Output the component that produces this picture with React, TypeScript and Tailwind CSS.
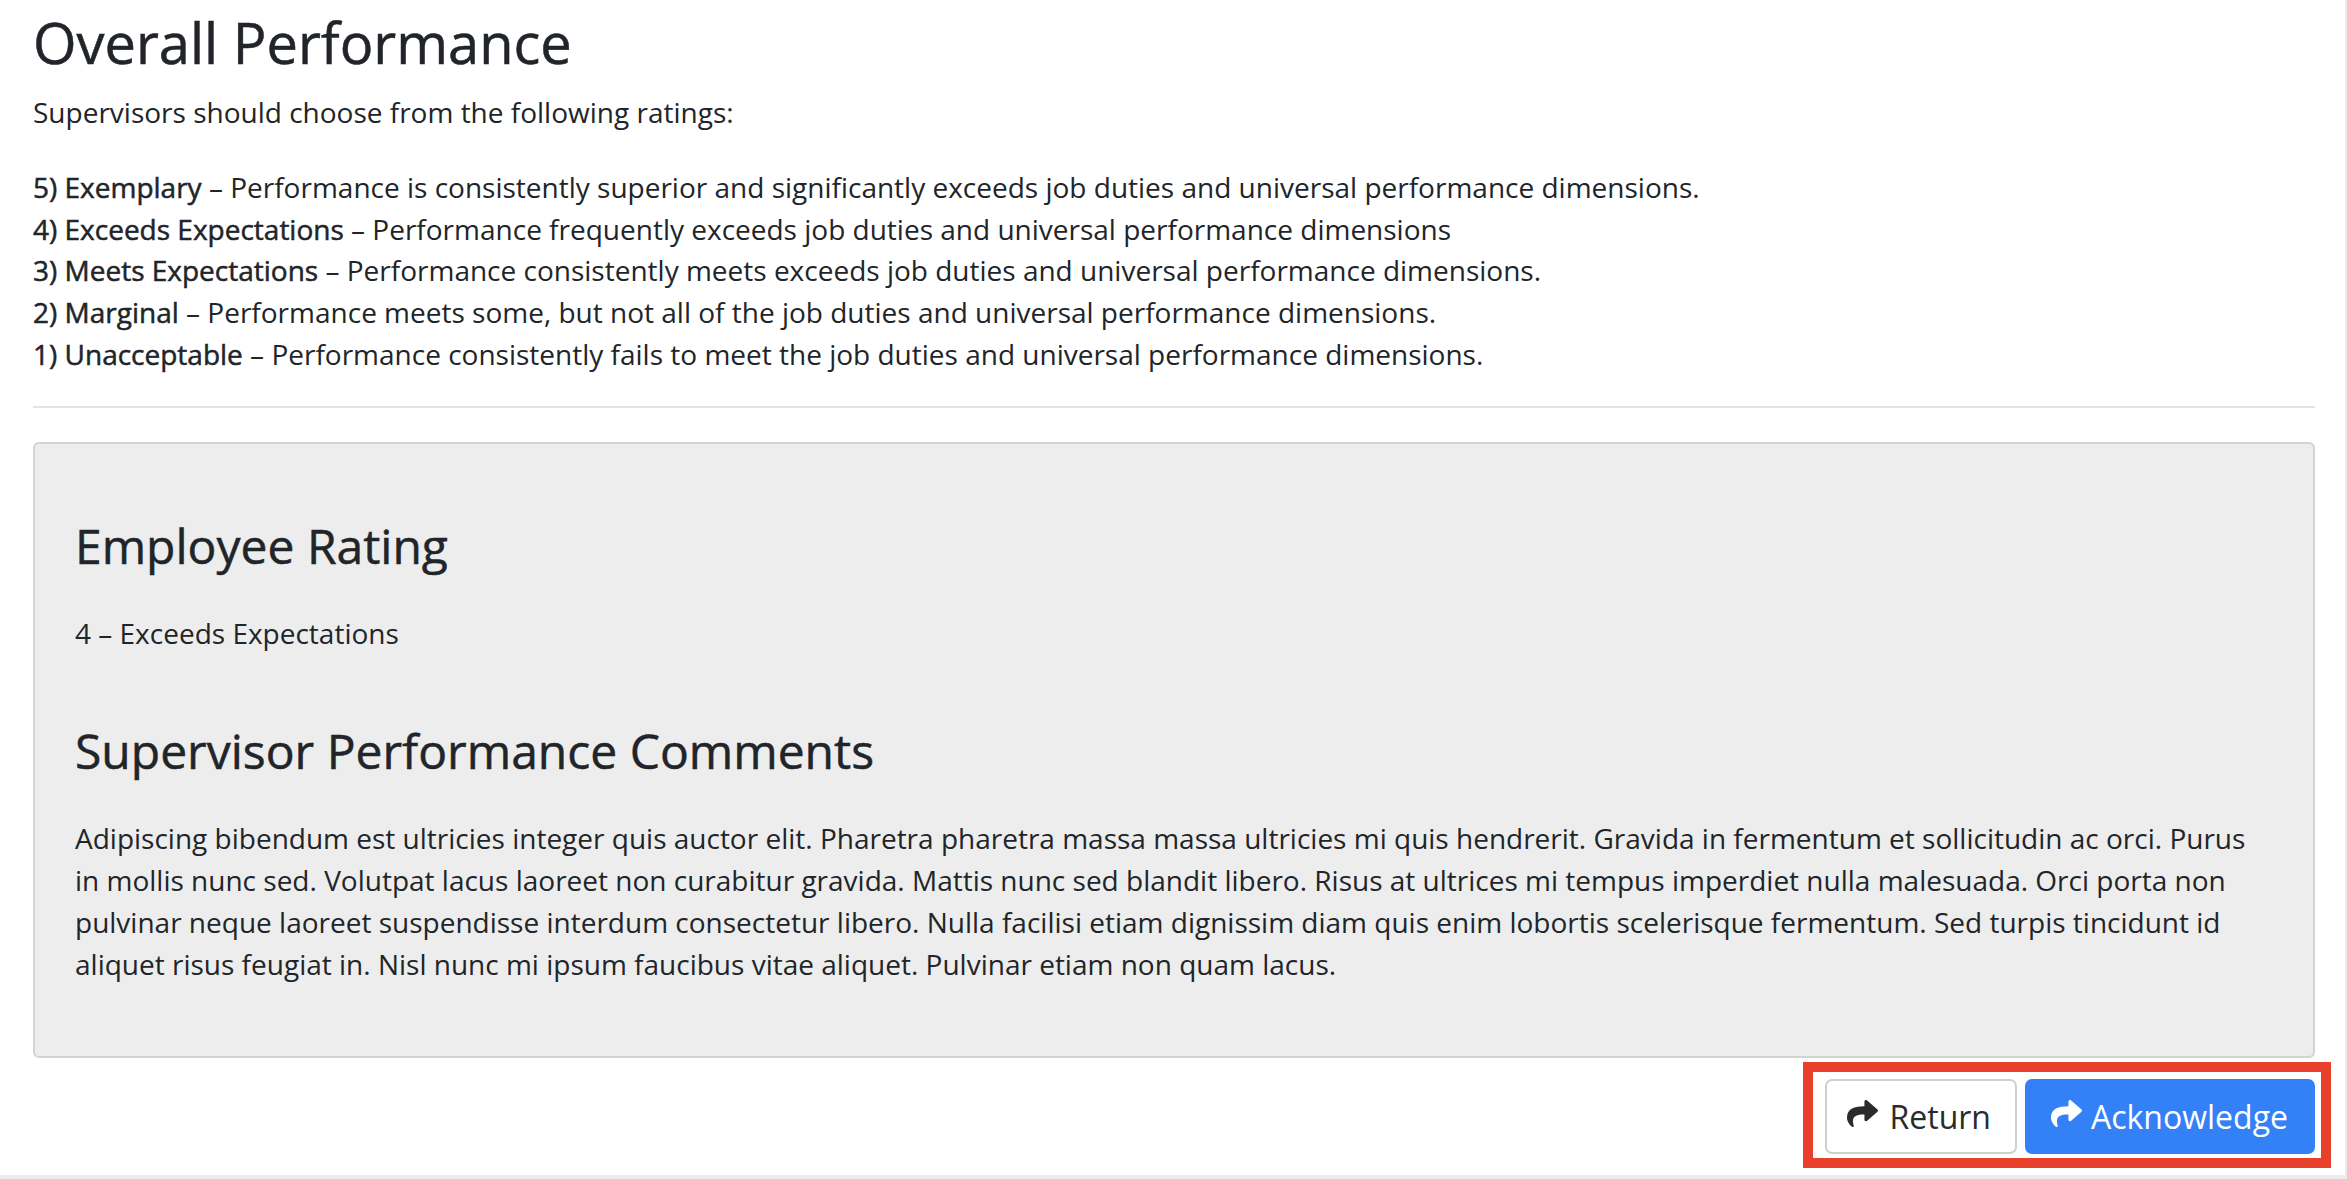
import { FaShare } from "react-icons/fa";

const ratings = [
  { label: "5) Exemplary", text: "Performance is consistently superior and significantly exceeds job duties and universal performance dimensions." },
  { label: "4) Exceeds Expectations", text: "Performance frequently exceeds job duties and universal performance dimensions" },
  { label: "3) Meets Expectations", text: "Performance consistently meets exceeds job duties and universal performance dimensions." },
  { label: "2) Marginal", text: "Performance meets some, but not all of the job duties and universal performance dimensions." },
  { label: "1) Unacceptable", text: "Performance consistently fails to meet the job duties and universal performance dimensions." },
];

const comments =
  "Adipiscing bibendum est ultricies integer quis auctor elit. Pharetra pharetra massa massa ultricies mi quis hendrerit. Gravida in fermentum et sollicitudin ac orci. Purus in mollis nunc sed. Volutpat lacus laoreet non curabitur gravida. Mattis nunc sed blandit libero. Risus at ultrices mi tempus imperdiet nulla malesuada. Orci porta non pulvinar neque laoreet suspendisse interdum consectetur libero. Nulla facilisi etiam dignissim diam quis enim lobortis scelerisque fermentum. Sed turpis tincidunt id aliquet risus feugiat in. Nisl nunc mi ipsum faucibus vitae aliquet. Pulvinar etiam non quam lacus.";

export default function App() {
  return (
    <div className="h-[1179px] w-full bg-[#ececec] font-['Open_Sans',sans-serif] text-[#212529]">
      <div className="h-[1175px] w-[2345px] bg-white pl-[33px] pr-[30px] pt-[9px]">
        <h1 className="text-[56px] leading-[67.2px] font-medium [-webkit-text-stroke:0.5px_#212529]">
          Overall Performance
        </h1>
        <p className="mt-[15px] text-[28px] leading-[42px]">
          Supervisors should choose from the following ratings:
        </p>

        <div className="mt-[34px] text-[28px] leading-[41.6px]">
          {ratings.map((r) => (
            <div key={r.label}>
              <span className="font-medium [-webkit-text-stroke:0.5px_#212529]">{r.label}</span> – {r.text}
            </div>
          ))}
        </div>

        <div className="mt-[31px] h-[2px] bg-[#e4e4e4]" />

        <section className="mt-[34px] rounded-[6px] border-2 border-[#d3d3d3] bg-[#ededed] pl-[40px] pr-[43px] pt-[73px] pb-[71px]">
          <h2 className="text-[48px] leading-[57.6px] font-medium [-webkit-text-stroke:0.5px_#212529]">
            Employee Rating
          </h2>
          <p className="mt-[37.5px] text-[28px] leading-[42px]">4 – Exceeds Expectations</p>
          <h2 className="mt-[67.5px] text-[48px] leading-[57.6px] font-medium [-webkit-text-stroke:0.5px_#212529]">
            Supervisor Performance Comments
          </h2>
          <p className="mt-[38px] text-[28px] leading-[42px]">{comments}</p>
        </section>

        <div className="mt-[4px] -mr-[16px] flex justify-end">
          <div className="flex gap-[8px] border-[10px] border-[#e8402a] bg-white pt-[7px] pb-[4px] pl-[12px] pr-[6px]">
            <button className="flex h-[75px] items-center gap-[12px] rounded-[7px] border-2 border-[#cfcfcf] bg-white pl-[20px] pr-[24px] text-[32px] text-[#2b2b2b]">
              <FaShare size={31} className="-mt-[6px]" />
              <span>Return</span>
            </button>
            <button className="flex h-[75px] items-center gap-[9px] rounded-[7px] border-2 border-[#3480f6] bg-[#3480f6] pl-[24px] pr-[25px] text-[32px] text-white">
              <FaShare size={31} className="-mt-[6px]" />
              <span>Acknowledge</span>
            </button>
          </div>
        </div>
      </div>
    </div>
  );
}
